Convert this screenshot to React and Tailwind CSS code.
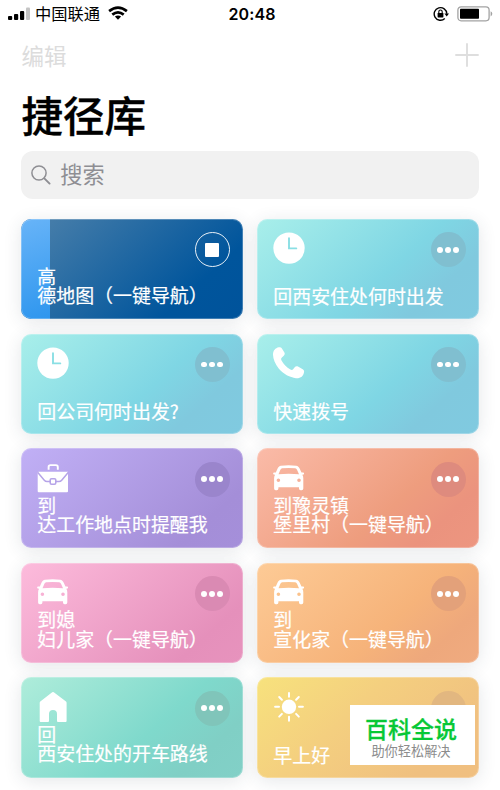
import React from "react";

const svgProps = { width: 32, height: 35, viewBox: "0 0 32 35", fill: "none" };

function Clock() {
  return (
    <svg {...svgProps}>
      <circle cx="16" cy="16.1" r="15.7" fill="#fff" />
      <path d="M16 6.2V16.4H23.3" stroke="#8adfe4" strokeWidth="1.9" strokeLinecap="round" />
    </svg>
  );
}

function Phone() {
  return (
    <svg {...svgProps}>
      <path
        d="M5.8 0.3C7.2 -0.1 8.2 0.3 8.9 1.4L11.4 5.6C12 6.7 11.8 7.7 11 8.5L8.9 10.5C8 11.4 7.9 12.2 8.4 13.2C10.4 17 13.6 20.2 17.4 22.6C18.5 23.3 19.4 23.2 20.1 22.3L21.7 20.2C22.5 19.2 23.8 18.9 25 19.5L29.7 22.2C30.9 22.9 31.3 24 31 25.2C30.4 29.2 27.6 31.5 23 31.2C16.9 30.6 10.4 27.1 5.7 21.6C2.1 17.2 0.1 11.8 0 7.8C-0.1 3.8 2.1 1.1 5.8 0.3Z"
        fill="#fff"
      />
    </svg>
  );
}

function Briefcase() {
  return (
    <svg {...svgProps}>
      <path d="M11.6 7.8V5C11.6 3.8 12.3 3.1 13.5 3.1H18.9C20.1 3.1 20.8 3.8 20.8 5V7.8" stroke="#fff" strokeWidth="1.9" />
      <path d="M1.4 9.7H31V29.2Q31 30.2 30 30.2H1.7Q0.7 30.2 0.7 29.2V10.4Z" fill="#fff" />
      <path d="M0.6 10.3L7.3 18.2Q8.4 19.5 10 19.5H22Q23.6 19.5 24.7 18.2L31.4 10.3" stroke="#b6a4e8" strokeWidth="1.5" />
      <rect x="13.2" y="16.7" width="5.6" height="5.5" rx="1.4" fill="#fff" stroke="#b6a4e8" strokeWidth="1.6" />
    </svg>
  );
}

function Car() {
  return (
    <svg {...svgProps}>
      <path
        fillRule="evenodd"
        d="M8 3.8Q15.5 2.6 23.2 3.8C24.9 4.1 25.9 5 26.6 6.5L28.5 10.4H30.1Q31.1 10.4 31.1 11.5Q31.1 12.8 29.3 12.8Q30.3 14.2 30.3 16.3V26.6Q30.3 28.3 28.6 28.3H27.6Q26 28.3 26 26.6V25.2H5.4V26.6Q5.4 28.3 3.8 28.3H2.7Q1.1 28.3 1.1 26.6V16.3Q1.1 14.2 2.1 12.8Q0.1 12.8 0.1 11.5Q0.1 10.4 1.2 10.4H2.8L4.6 6.5C5.3 5 6.3 4.1 8 3.8ZM9.2 6.3Q8 6.5 7.4 7.8L5.5 12.2Q15.7 11.5 26 12.2L24 7.8Q23.4 6.5 22.2 6.3Q15.7 5.5 9.2 6.3ZM5.4 16.4A1.8 1.8 0 1 0 5.4 20A1.8 1.8 0 1 0 5.4 16.4ZM26 16.4A1.8 1.8 0 1 0 26 20A1.8 1.8 0 1 0 26 16.4Z"
        fill="#fff"
      />
    </svg>
  );
}

function House() {
  return (
    <svg {...svgProps}>
      <path
        d="M15.2 1.3Q16 0.7 16.8 1.3L29 10.6Q29.6 11.1 29.6 11.9V30Q29.6 31 28.6 31H21Q20 31 20 30V22.9Q20 19 16 19Q12 19 12 22.9V30Q12 31 11 31H3.7Q2.7 31 2.7 30V11.9Q2.7 11.1 3.3 10.6Z"
        fill="#fff"
      />
    </svg>
  );
}

function Sun() {
  return (
    <svg {...svgProps}>
      <circle cx="16" cy="15.8" r="7.2" fill="#fff" />
      <path
        d="M16 1.9V5.8M16 25.8V29.7M2.1 15.8H6M26 15.8H29.9M6.2 6L8.9 8.7M23.1 22.9L25.8 25.6M6.2 25.6L8.9 22.9M23.1 8.7L25.8 6"
        stroke="#fff"
        strokeWidth="2"
        strokeLinecap="round"
      />
    </svg>
  );
}

const CYAN = "bg-[linear-gradient(138deg,#a7eeea_2%,#7fd6e4_57%,#80c9de_78%,#80cae0_100%)]";

const cards = [
  { lines: ["高", "德地图（一键导航）"], bg: "bg-[linear-gradient(138deg,#447ca9_10%,#00559c_75%,#00539b_100%)]", running: true },
  { lines: ["回西安住处何时出发"], bg: CYAN, Icon: Clock, dot: "bg-[#80bfd0]" },
  { lines: ["回公司何时出发?"], bg: CYAN, Icon: Clock, dot: "bg-[#80bfd0]" },
  { lines: ["快速拨号"], bg: CYAN, Icon: Phone, dot: "bg-[#80bfd0]" },
  { lines: ["到", "达工作地点时提醒我"], bg: "bg-[linear-gradient(138deg,#c0aff5_2%,#a48ed8_80%,#a58fda_100%)]", Icon: Briefcase, dot: "bg-[#9a85cc]" },
  { lines: ["到豫灵镇", "堡里村（一键导航）"], bg: "bg-[linear-gradient(138deg,#fabaa7_2%,#ee9d7e_60%,#eb937e_80%,#ed9680_100%)]", Icon: Car, dot: "bg-[#de8b7e]" },
  { lines: ["到媳", "妇儿家（一键导航）"], bg: "bg-[linear-gradient(138deg,#fcbadb_2%,#e590bb_80%,#e793bd_100%)]", Icon: Car, dot: "bg-[#da8ab3]" },
  { lines: ["到", "宣化家（一键导航）"], bg: "bg-[linear-gradient(138deg,#fdca95_2%,#f6b37a_60%,#eea87c_82%,#f0ab80_100%)]", Icon: Car, dot: "bg-[#e3a17a]" },
  { lines: ["回", "西安住处的开车路线"], bg: "bg-[linear-gradient(138deg,#adecda_2%,#7fd9cc_57%,#80cfc5_80%,#82d0c7_100%)]", Icon: House, dot: "bg-[#80c5ba]" },
  { lines: ["早上好"], bg: "bg-[linear-gradient(138deg,#f7e17d_2%,#f4cf7f_40%,#f0c080_80%,#f0bf80_100%)]", Icon: Sun, dot: "bg-[#e2b780]" },
];

function Card({ lines, bg, Icon, dot, running }) {
  return (
    <div className={`relative flex h-[100.2px] flex-col justify-between overflow-hidden rounded-[10.5px] pt-[13.4px] pr-[13.2px] pl-4 ${lines.length > 1 ? "pb-[15.2px]" : "pb-[13.8px]"} ${bg}`}>
      {running && <div className="absolute inset-y-0 left-0 w-[28.7px] bg-[linear-gradient(160deg,#68b4f8,#2e96ee)]" />}
      <div className="absolute inset-0 rounded-[10.5px] border border-white/25" />
      <div className="relative flex h-[31px] items-start justify-between">
        {Icon ? <Icon /> : <span />}
        {running ? (
          <div className="flex size-[35px] items-center justify-center rounded-full border-[1.5px] border-white/90">
            <div className="size-[13.6px] rounded-[1px] bg-white" />
          </div>
        ) : (
          <div className={`flex size-[35px] items-center justify-center gap-[2.4px] rounded-full ${dot}`}>
            <div className="size-[5.7px] rounded-full bg-white" />
            <div className="size-[5.7px] rounded-full bg-white" />
            <div className="size-[5.7px] rounded-full bg-white" />
          </div>
        )}
      </div>
      <div lang="zh-CN" className="relative text-[18.95px] leading-[19.2px] whitespace-nowrap text-white [-webkit-text-stroke:0.2px_white]">
        {lines.map((l) => (
          <div key={l}>{l}</div>
        ))}
      </div>
    </div>
  );
}

function StatusBar() {
  return (
    <header className="grid h-7 grid-cols-3 items-center pr-[7px] pl-2">
      <div className="flex items-center">
        <svg width="22" height="14" viewBox="0 0 22 14">
          <rect x="0" y="9" width="4.2" height="4" rx="1" />
          <rect x="6" y="7" width="4.2" height="6" rx="1" />
          <rect x="12" y="4" width="4.2" height="9" rx="1" />
          <rect x="18" y="0.5" width="4" height="12.5" rx="1" fill="#c4c4c4" />
        </svg>
        <span className="-mt-[2px] ml-[5px] text-[16.3px] leading-7 whitespace-nowrap">中国联通</span>
        <svg className="-mt-[2px] ml-[7.5px]" width="20" height="14" viewBox="0 0 20 14" fill="none" stroke="#000" strokeWidth="2.7">
          <path d="M1.1 5.1Q10 -2 18.9 5.1" />
          <path d="M4.3 8.6Q10 4 15.7 8.6" />
          <path d="M6.9 10.6Q10 8.2 13.1 10.6L10 13.7Z" fill="#000" stroke="none" />
        </svg>
      </div>
      <div className="pl-[3px] text-center font-[Inter,sans-serif] text-[16px] leading-7 font-semibold tracking-[0.1px]">20:48</div>
      <div className="flex items-center justify-end">
        <svg className="mr-[8px]" width="16" height="16" viewBox="0 0 16 16" fill="none">
          <path d="M13.8 7.7A6.3 6.3 0 1 0 11.8 12.6" stroke="#000" strokeWidth="1.4" />
          <path d="M11.4 7.5H16L13.7 10.5Z" fill="#000" />
          <rect x="4.6" y="7" width="5.8" height="4.4" rx="0.6" fill="#000" />
          <path d="M5.8 7V5.7A1.7 1.7 0 0 1 9.2 5.7V7" stroke="#000" strokeWidth="1.1" />
        </svg>
        <svg width="36" height="16" viewBox="0 0 36 16">
          <rect x="0.9" y="0.8" width="31.2" height="14" rx="3.2" fill="none" stroke="#a3a3a3" strokeWidth="1.3" />
          <rect x="3" y="2.8" width="19" height="10" rx="0.8" />
          <path d="M33.6 5.2Q35.3 6 35.3 7.8Q35.3 9.6 33.6 10.4Z" fill="#a3a3a3" />
        </svg>
      </div>
    </header>
  );
}

export default function App() {
  return (
    <div className="relative h-[790px] w-[500px] overflow-hidden bg-white font-['Noto_Sans_CJK_SC',sans-serif] text-black">
      <StatusBar />
      <nav className="flex h-14 items-center justify-between pr-[21px] pl-[21.5px]">
        <span className="mb-[2px] text-[22.5px] leading-8 text-[#dcdcdc]">编辑</span>
        <svg width="24" height="24" viewBox="0 0 24 24" className="mb-[2px]" stroke="#dedede" strokeWidth="1.9" strokeLinecap="round">
          <path d="M12 1V23M1 12H23" />
        </svg>
      </nav>
      <h1 className="ml-[21.5px] h-[67.3px] text-[41.5px] leading-[60px] font-medium [-webkit-text-stroke:0.3px_black]">捷径库</h1>
      <div className="mx-[21.3px] flex h-[47.7px] items-center rounded-[12px] bg-[#f1f1f1] pl-[10px]">
        <svg width="20" height="20" viewBox="0 0 20 20" fill="none" stroke="#8e8e93" strokeLinecap="round">
          <circle cx="8" cy="8" r="7.1" strokeWidth="1.5" />
          <path d="M13.3 13.3L18.6 18.6" strokeWidth="1.9" />
        </svg>
        <span className="mb-[4px] ml-[9px] text-[22.2px] leading-8 text-[#8e8e93]">搜索</span>
      </div>
      <main className="mx-[21.3px] mt-[20.1px] grid grid-cols-2 gap-x-[14.6px] gap-y-[14.4px]">
        {cards.map((c) => (
          <div key={c.lines.join("")} className="rounded-[10.5px] shadow-[0_3px_18px_rgba(40,60,70,0.12)]">
            <Card {...c} />
          </div>
        ))}
      </main>
      <div className="absolute top-[705px] left-[350px] flex h-[60px] w-[125px] flex-col items-center bg-white pt-[10px] pr-[3px]">
        <div className="text-[23px] leading-[27px] font-medium text-[#07c836] [-webkit-text-stroke:0.3px_#07c836]">百科全说</div>
        <div className="text-[13.2px] leading-[17px] text-[#8c8c8c]">助你轻松解决</div>
      </div>
    </div>
  );
}
